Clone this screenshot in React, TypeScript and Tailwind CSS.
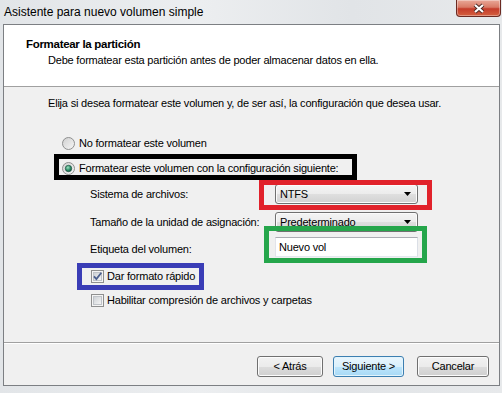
import React from "react";

interface boxProps {
  checked?: boolean;
}

// Aero radio button
const Radio = ({ checked }: boxProps) => (
  <svg width="13" height="13" viewBox="0 0 13 13" className="shrink-0">
    <defs>
      <linearGradient id="radioBg" x1="0" y1="0" x2="1" y2="1">
        <stop offset="0" stopColor="#cfcfcf" />
        <stop offset="1" stopColor="#f7f7f7" />
      </linearGradient>
      <radialGradient id="radioDot" cx="0.4" cy="0.35" r="0.7">
        <stop offset="0" stopColor="#9be3c0" />
        <stop offset="0.6" stopColor="#2c8a66" />
        <stop offset="1" stopColor="#0f5a40" />
      </radialGradient>
    </defs>
    <circle cx="6.5" cy="6.5" r="6" fill="url(#radioBg)" stroke="#8e8f8f" />
    {checked && (
      <circle cx="6.5" cy="6.5" r="3.2" fill="url(#radioDot)" stroke="#1d4f40" strokeWidth="0.7" />
    )}
  </svg>
);

// Aero checkbox
const Check = ({ checked }: boxProps) => (
  <svg width="13" height="13" viewBox="0 0 13 13" className="shrink-0">
    <defs>
      <linearGradient id="checkBg" x1="0" y1="0" x2="1" y2="1">
        <stop offset="0" stopColor="#cbcfd4" />
        <stop offset="1" stopColor="#f6f6f6" />
      </linearGradient>
    </defs>
    <rect x="0.5" y="0.5" width="12" height="12" fill="#f4f4f4" stroke="#8e8f8f" />
    <rect x="2.5" y="2.5" width="8" height="8" fill="url(#checkBg)" stroke="#bfc3c8" />
    {checked && (
      <path d="M3 6.3 L5.4 9 L10.3 2.8" fill="none" stroke="#4b5f8e" strokeWidth="1.8" />
    )}
  </svg>
);

const Combo = ({ value }: { value: string }) => (
  <div className="flex h-[20px] w-[143px] items-center justify-between rounded-[3px] border border-[#707070] bg-[linear-gradient(#f4f4f4_0%,#ececec_50%,#dfdfdf_50%,#d2d2d2_100%)] pl-[4px] pr-[6px] shadow-[inset_0_0_0_1px_#fbfbfb]">
    <span className="leading-none">{value}</span>
    <svg width="7" height="4" viewBox="0 0 7 4">
      <path d="M0 0h7L3.5 4z" fill="#000" />
    </svg>
  </div>
);

const Button = ({ label, primary }: { label: string; primary?: boolean }) => (
  <div
    className={`flex h-[21px] items-center justify-center rounded-[3px] border ${
      primary
        ? "border-[#3c7fb1] bg-[linear-gradient(#eaf6fd_0%,#d9f0fc_50%,#bee6fd_50%,#a7d9f5_100%)] shadow-[inset_0_0_0_1px_#e3f4fc]"
        : "border-[#707070] bg-[linear-gradient(#f2f2f2_0%,#ebebeb_50%,#dddddd_50%,#cfcfcf_100%)] shadow-[inset_0_0_0_1px_#fcfcfc]"
    }`}
  >
    {label}
  </div>
);

const App = () => {
  return (
    <div className="relative h-[393px] w-[502px] overflow-hidden bg-[linear-gradient(90deg,#e2e5e8,#eceef0_40%,#e1e4e7_70%,#e7e9eb)] font-['Liberation_Sans',Arial,sans-serif] text-[11px] tracking-[-0.2px] text-black">
      {/* title bar */}
      <div className="flex h-[24px] items-start justify-between">
        <span className="pl-[4px] pt-[5px] text-[12px] leading-[14px] tracking-normal">
          Asistente para nuevo volumen simple
        </span>
        <div className="mr-[1px] flex h-[17px] w-[45px] items-center justify-center rounded-b-[4px] border border-t-0 border-[#6b2a22] bg-[linear-gradient(#e9a898_0%,#d97a66_45%,#c53c2a_55%,#d4603f_100%)] shadow-[inset_0_0_0_1px_rgba(255,255,255,0.35)]">
          <svg width="14" height="11" viewBox="0 0 14 11">
            <path d="M3 2 L11 9 M11 2 L3 9" stroke="#4a2a25" strokeWidth="4" />
            <path d="M3 2 L11 9 M11 2 L3 9" stroke="#fff" strokeWidth="2.2" />
          </svg>
        </div>
      </div>

      {/* client area */}
      <div className="ml-[3px] mr-[2px] flex h-[362px] flex-col border border-[#7c7f83] bg-[#f0f0f0]">
        {/* header */}
        <div className="h-[62px] shrink-0 border-b border-[#a0a0a0] bg-white pt-[11px]">
          <p className="pl-[22px] text-[11.5px] font-bold leading-[16px] tracking-[-0.3px]">Formatear la partición</p>
          <p className="pl-[44px] leading-[16px]">
            Debe formatear esta partición antes de poder almacenar datos en ella.
          </p>
        </div>

        {/* body */}
        <div className="flex-1 pt-[8px]">
          <p className="pl-[44px] leading-[16px]">
            Elija si desea formatear este volumen y, de ser así, la configuración que desea usar.
          </p>

          <div className="mt-[24px] flex h-[16px] items-center gap-[4px] pl-[58px]">
            <Radio />
            <span>No formatear este volumen</span>
          </div>
          <div className="mt-[9px] flex h-[16px] items-center gap-[4px] pl-[58px]">
            <Radio checked />
            <span>Formatear este volumen con la configuración siguiente:</span>
          </div>

          <div className="mt-[8px] grid grid-cols-[185px_143px] gap-y-[8px] pl-[86px]">
            <span className="flex h-[20px] items-center">Sistema de archivos:</span>
            <Combo value="NTFS" />
            <span className="flex h-[20px] items-center">Tamaño de la unidad de asignación:</span>
            <Combo value="Predeterminado" />
            <span className="mt-[-3px] flex h-[20px] items-center pt-[4px]">Etiqueta del volumen:</span>
            <div className="mt-[-3px] flex h-[20px] items-center border border-[#abadb3] border-b-[#e3e9ef] border-l-[#e2e3ea] border-r-[#dbdfe6] bg-white pl-[3px]">
              Nuevo vol
            </div>
          </div>

          <div className="mt-[11px] flex h-[16px] items-center gap-[3px] pl-[87px]">
            <Check checked />
            <span>Dar formato rápido</span>
          </div>
          <div className="mt-[8px] flex h-[16px] items-center gap-[3px] pl-[87px]">
            <Check />
            <span>Habilitar compresión de archivos y carpetas</span>
          </div>
        </div>

        {/* footer */}
        <div className="flex h-[43px] shrink-0 items-start justify-end border-t border-[#a0a0a0] pr-[10px] pt-[13px] shadow-[inset_0_1px_0_#ffffff]">
          <div className="w-[66px]">
            <Button label="< Atrás" />
          </div>
          <div className="ml-[10px] w-[71px]">
            <Button label="Siguiente >" primary />
          </div>
          <div className="ml-[13px] w-[72px]">
            <Button label="Cancelar" />
          </div>
        </div>
      </div>

      {/* highlight annotations drawn over the dialog */}
      <div className="absolute left-[54px] top-[154px] h-[26px] w-[303px] border-[5px] border-black" />
      <div className="absolute left-[259px] top-[180px] h-[30px] w-[173px] border-[5px] border-[#e1222b]" />
      <div className="absolute left-[264px] top-[226px] h-[37px] w-[163px] border-[5px] border-[#25a64b]" />
      <div className="absolute left-[77px] top-[263px] h-[27px] w-[127px] border-[5px] border-[#3a3db6]" />
    </div>
  );
};

export default App;
